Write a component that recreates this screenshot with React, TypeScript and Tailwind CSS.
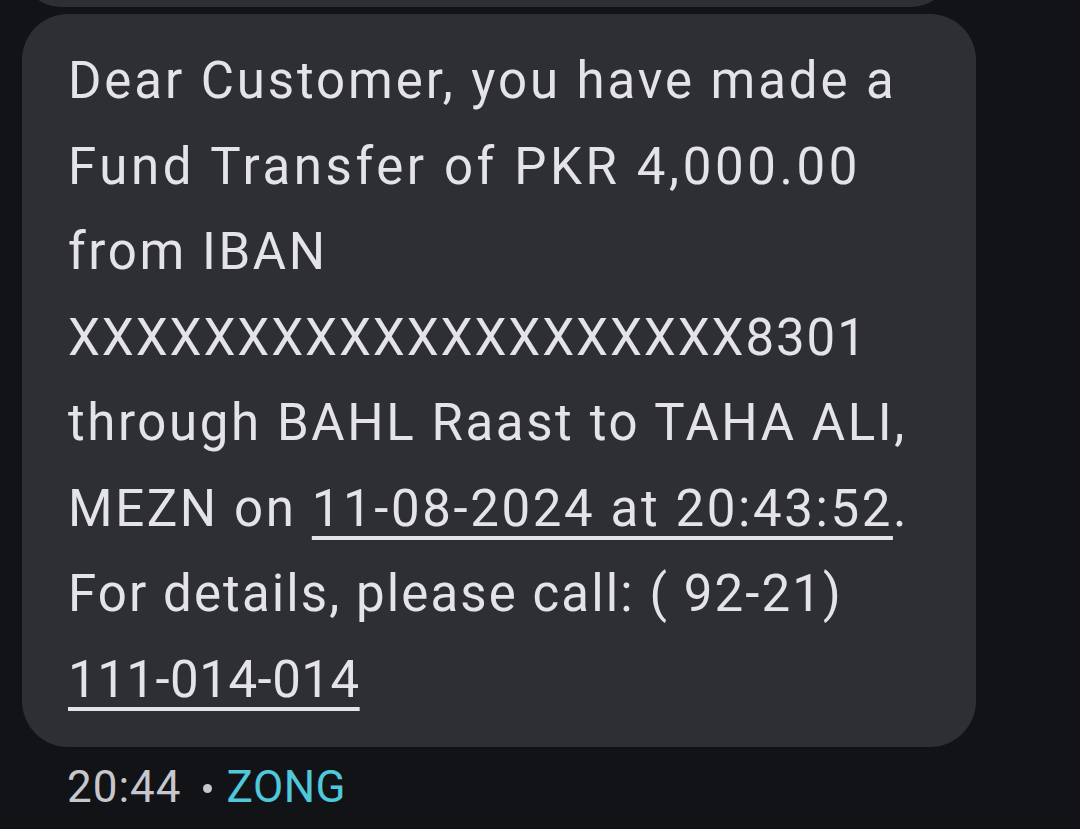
const lines: { text: string; link?: [string, string, string]; track: string }[] = [
  { text: "Dear Customer, you have made a", track: "tracking-[2.9px]" },
  { text: "Fund Transfer of PKR 4,000.00", track: "tracking-[3.6px]" },
  { text: "from IBAN", track: "tracking-[2.6px]" },
  { text: "XXXXXXXXXXXXXXXXXXXX8301", track: "tracking-[1.9px]" },
  { text: "through BAHL Raast to TAHA ALI,", track: "tracking-[2.6px]" },
  { text: "", link: ["MEZN on ", "11-08-2024 at 20:43:52", "."], track: "tracking-[2.6px]" },
  { text: "For details, please call: ( 92-21)", track: "tracking-[2.1px]" },
  { text: "", link: ["", "111-014-014", ""], track: "tracking-[0.5px]" },
];

export default function App() {
  return (
    <div
      className="h-[829px] w-[1080px] overflow-hidden bg-[#121317]"
      style={{ fontFamily: "Roboto, 'Liberation Sans', sans-serif" }}
    >
      {/* tail of the previous message */}
      <div className="-mt-[40px] ml-[21px] h-[47px] w-[930px] rounded-b-[40px] bg-[#2e2f34]" />

      <div className="mt-[7px] ml-[22px] w-[954px] rounded-[46px] bg-[#2e2f34] pt-[24px] pb-[25px] pl-[46px]">
        {lines.map((l, i) => (
          <div key={i} className={`text-[51px] leading-[85.5px] whitespace-nowrap text-[#e4e4e8] ${l.track}`}>
            {l.link ? (
              <>
                {l.link[0]}
                <span className="underline decoration-[4px] underline-offset-[10px]">{l.link[1]}</span>
                {l.link[2]}
              </>
            ) : (
              l.text
            )}
          </div>
        ))}
      </div>

      <div className="mt-[14px] ml-[67px] flex items-center text-[44px] leading-[52px]">
        <span className="tracking-[1px] text-[#c6c7cd]">20:44</span>
        <span className="mt-[2px] mr-[15px] ml-[21px] h-[9px] w-[9px] rounded-full bg-[#c6c7cd]" />
        <span className="tracking-[0.5px] text-[#4fc8dc]">ZONG</span>
      </div>
    </div>
  );
}
